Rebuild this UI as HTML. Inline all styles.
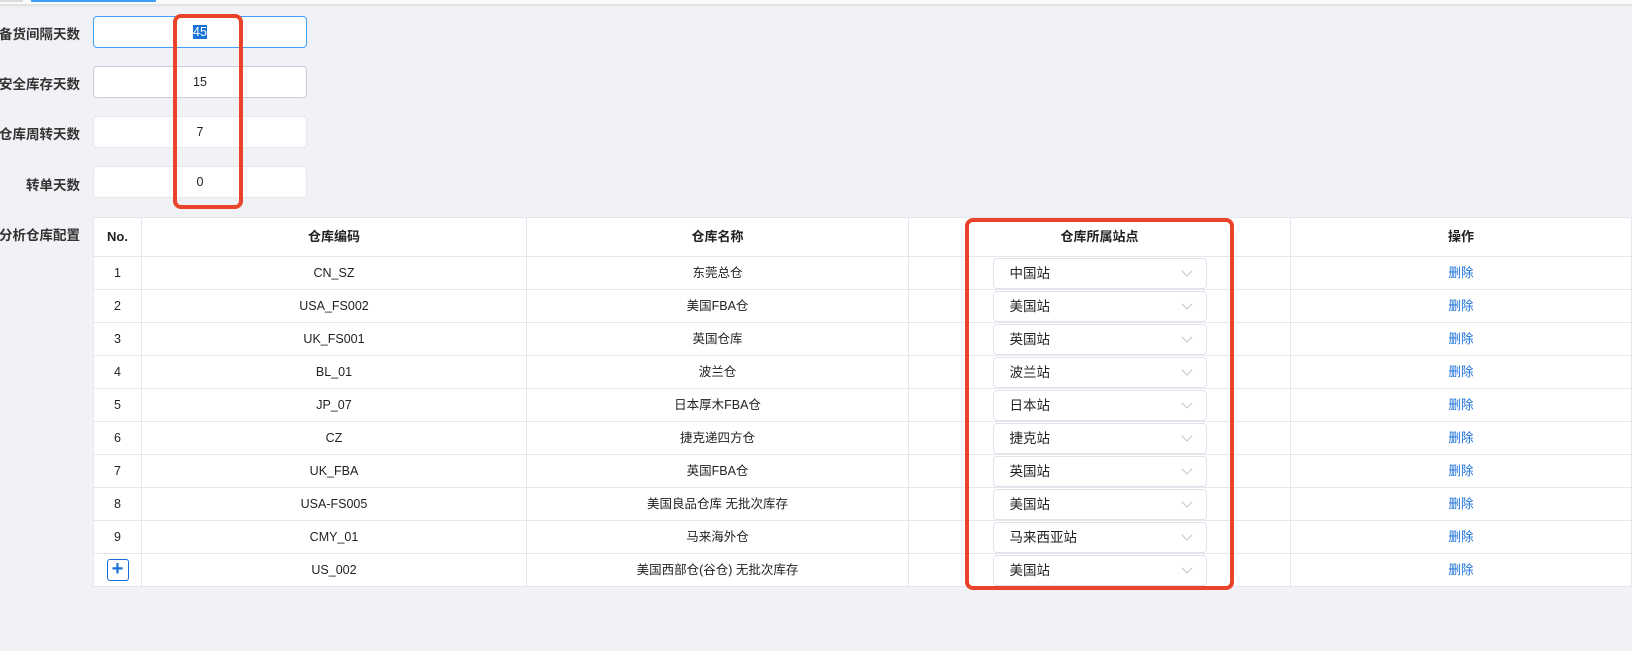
<!DOCTYPE html>
<html><head><meta charset="utf-8"><style>
*{box-sizing:border-box;margin:0;padding:0}
body{width:1632px;height:651px;background:#f0f2f5;font-family:"Liberation Sans","Noto Sans CJK SC",sans-serif;font-size:13px;color:#222;position:relative;overflow:hidden}
.top{position:absolute;left:0;top:0;width:1632px;height:4px;background:#fafafa;box-shadow:0 1px 3px rgba(0,0,0,.12)}
.top i{position:absolute;left:31px;top:0;width:125px;height:2px;background:#409eff}
.top b{position:absolute;left:0;top:0;width:23px;height:2px;background:#ddd}
.lbl{position:absolute;right:1552px;font-weight:bold;font-size:13.5px;color:#333;white-space:nowrap}
.inp{position:absolute;left:93px;width:214px;height:32px;background:#fff;border:1px solid #e4e7ed;border-radius:4px;text-align:center;line-height:30px;font-size:12.5px}
.red{position:absolute;border:4px solid #e8432b;border-radius:8px}
table{position:absolute;left:93px;top:216.5px;width:1539px;border-collapse:collapse;background:#fff;table-layout:fixed}
td,th{border:1px solid #e4e7ed;text-align:center;height:33px;font-size:12.5px;color:#222;padding:0;vertical-align:middle;line-height:16px}
th{height:39.5px;font-weight:bold;font-size:13px;color:#222}
.sel{display:block;margin:0 auto;width:214px;height:31px;border:1px solid #e0e3e9;border-radius:4px;text-align:left;padding-left:16px;line-height:29px;position:relative;font-size:13.5px}
.sel:after{content:"";position:absolute;right:15px;top:8px;width:7px;height:7px;border-right:1px solid #c0c4cc;border-bottom:1px solid #c0c4cc;transform:rotate(45deg)}
a{color:#1a6fd8;text-decoration:none}
.plus{display:block;margin:0 auto;width:22px;height:22px;border:1.5px solid #1a6fd8;border-radius:3px;color:#1a6fd8;font-weight:bold;font-size:20px;line-height:18px}
</style></head><body>
<div class="top"><b></b><i></i></div>
<div class="lbl" style="top:23px">备货间隔天数</div>
<div class="lbl" style="top:73px">安全库存天数</div>
<div class="lbl" style="top:123px">仓库周转天数</div>
<div class="lbl" style="top:174px">转单天数</div>
<div class="lbl" style="top:224px">分析仓库配置</div>
<div class="inp" style="top:15.5px;border-color:#409eff"><span style="background:#1a73d9;color:#fff">45</span></div>
<div class="inp" style="top:65.5px;border-color:#ccd">15</div>
<div class="inp" style="top:115.5px">7</div>
<div class="inp" style="top:165.5px">0</div>
<table>
<tr><th style="width:48px">No.</th><th style="width:385px">仓库编码</th><th style="width:382px">仓库名称</th><th style="width:382px">仓库所属站点</th><th>操作</th></tr>
<tr><td>1</td><td>CN_SZ</td><td>东莞总仓</td><td><span class="sel">中国站</span></td><td><a>删除</a></td></tr>
<tr><td>2</td><td>USA_FS002</td><td>美国FBA仓</td><td><span class="sel">美国站</span></td><td><a>删除</a></td></tr>
<tr><td>3</td><td>UK_FS001</td><td>英国仓库</td><td><span class="sel">英国站</span></td><td><a>删除</a></td></tr>
<tr><td>4</td><td>BL_01</td><td>波兰仓</td><td><span class="sel">波兰站</span></td><td><a>删除</a></td></tr>
<tr><td>5</td><td>JP_07</td><td>日本厚木FBA仓</td><td><span class="sel">日本站</span></td><td><a>删除</a></td></tr>
<tr><td>6</td><td>CZ</td><td>捷克递四方仓</td><td><span class="sel">捷克站</span></td><td><a>删除</a></td></tr>
<tr><td>7</td><td>UK_FBA</td><td>英国FBA仓</td><td><span class="sel">英国站</span></td><td><a>删除</a></td></tr>
<tr><td>8</td><td>USA-FS005</td><td>美国良品仓库 无批次库存</td><td><span class="sel">美国站</span></td><td><a>删除</a></td></tr>
<tr><td>9</td><td>CMY_01</td><td>马来海外仓</td><td><span class="sel">马来西亚站</span></td><td><a>删除</a></td></tr>
<tr><td><span class="plus">+</span></td><td>US_002</td><td>美国西部仓(谷仓) 无批次库存</td><td><span class="sel">美国站</span></td><td><a>删除</a></td></tr>
</table>
<div class="red" style="left:173px;top:13.5px;width:70px;height:195px"></div>
<div class="red" style="left:965px;top:217.5px;width:269px;height:372px"></div>
</body></html>
